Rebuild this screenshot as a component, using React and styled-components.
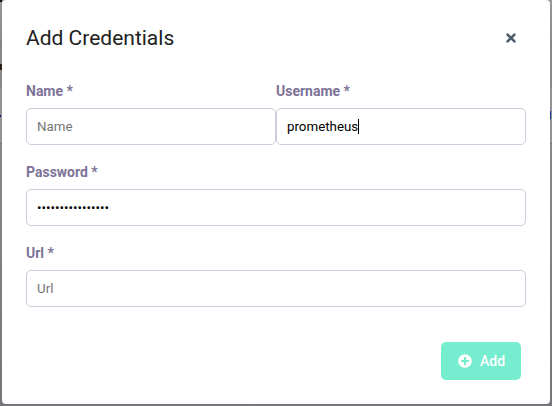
import React from "react";
import styled, { createGlobalStyle } from "styled-components";
import { FaPlusCircle, FaTimes } from "react-icons/fa";

const GlobalStyle = createGlobalStyle`
  *, *::before, *::after { box-sizing: border-box; }
  body {
    margin: 0;
    overflow: hidden;
    font-family: Roboto, sans-serif;
  }
`;

const Backdrop = styled.div`
  position: relative;
  display: flex;
  width: 552px;
  height: 406px;
  padding: 0 2px 2px;
  background: linear-gradient(
    #96969a 0, #8c8c90 41px, #7a7a7f 41px, #7a7a7f 42px,
    #88888a 42px, #88888a 88px, #929294 88px, #929294 143px,
    #77777c 143px, #77777c 144px, #88878b 144px, #777579 100%
  );
`;

const PageFragment = styled.span`
  position: absolute;
  top: ${({ $top }) => $top}px;
  left: ${({ $left }) => $left}px;
  width: ${({ $width = 2 }) => $width}px;
  height: ${({ $height }) => $height}px;
  background: ${({ $color }) => $color};
`;

const Dialog = styled.form`
  position: relative;
  display: flex;
  flex-direction: column;
  width: 548px;
  height: 404px;
  padding: 24px;
  border-radius: 4px;
  background: #fff;
`;

const Header = styled.header`
  display: flex;
  align-items: center;
  justify-content: space-between;
  height: 28px;
  margin-bottom: 30px;
`;

const Title = styled.h2`
  margin: 0;
  color: #212121;
  font-size: 21px;
  font-weight: 400;
  line-height: 28px;
`;

const CloseButton = styled.button`
  display: flex;
  align-items: center;
  justify-content: center;
  width: 30px;
  height: 28px;
  padding: 0;
  border: 0;
  background: none;
  color: #4f5d6b;
  font-size: 14px;
`;

const Fields = styled.div`
  display: grid;
  grid-template-columns: 1fr 1fr;
  row-gap: 18px;
`;

const Field = styled.label`
  display: flex;
  flex-direction: column;
  grid-column: ${({ $wide }) => ($wide ? "1 / -1" : "auto")};
`;

const Label = styled.span`
  height: 18px;
  margin-bottom: 8px;
  color: #7d7297;
  font-size: 14px;
  font-weight: 700;
  line-height: 18px;
`;

const Input = styled.input`
  width: 100%;
  height: 37px;
  padding: 0 10px;
  border: 1px solid #cfcbdc;
  border-radius: 5px;
  outline: none;
  background: #fff;
  color: #000;
  font: 13.333px Roboto, sans-serif;

  &::placeholder { color: #757575; }
`;

const InputFrame = styled.span`
  position: relative;
  display: flex;
`;

const Caret = styled.span`
  position: absolute;
  top: 11px;
  left: 82px;
  width: 1px;
  height: 15px;
  background: #000;
`;

const Footer = styled.footer`
  display: flex;
  justify-content: flex-end;
  margin-top: 35px;
  padding-right: 5px;
`;

const AddButton = styled.button`
  display: flex;
  align-items: center;
  justify-content: center;
  gap: 8px;
  width: 80px;
  height: 38px;
  padding: 0 0 0 1px;
  border: 0;
  border-radius: 5px;
  background: #76edce;
  color: #fff;
  font: 500 14px Roboto, sans-serif;
`;

export default function App() {
  return (
    <>
      <GlobalStyle />
      <Backdrop>
        <PageFragment $top={0} $left={0} $height={2} $color="#17131c" />
        <PageFragment $top={64} $left={0} $height={6} $color="#2b2119" />
        <PageFragment $top={115} $left={0} $width={1} $height={2} $color="#17145c" />
        <PageFragment $top={111} $left={550} $width={1} $height={8} $color="#113a8e" />
        <Dialog>
          <Header>
            <Title>Add Credentials</Title>
            <CloseButton type="button" aria-label="Close">
              <FaTimes />
            </CloseButton>
          </Header>
          <Fields>
            <Field>
              <Label>Name *</Label>
              <Input type="text" placeholder="Name" />
            </Field>
            <Field>
              <Label>Username *</Label>
              <InputFrame>
                <Input type="text" defaultValue="prometheus" />
                <Caret />
              </InputFrame>
            </Field>
            <Field $wide>
              <Label>Password *</Label>
              <Input type="password" defaultValue="prometheus-admin" />
            </Field>
            <Field $wide>
              <Label>Url *</Label>
              <Input type="text" placeholder="Url" />
            </Field>
          </Fields>
          <Footer>
            <AddButton type="button">
              <FaPlusCircle />
              <span>Add</span>
            </AddButton>
          </Footer>
        </Dialog>
      </Backdrop>
    </>
  );
}
